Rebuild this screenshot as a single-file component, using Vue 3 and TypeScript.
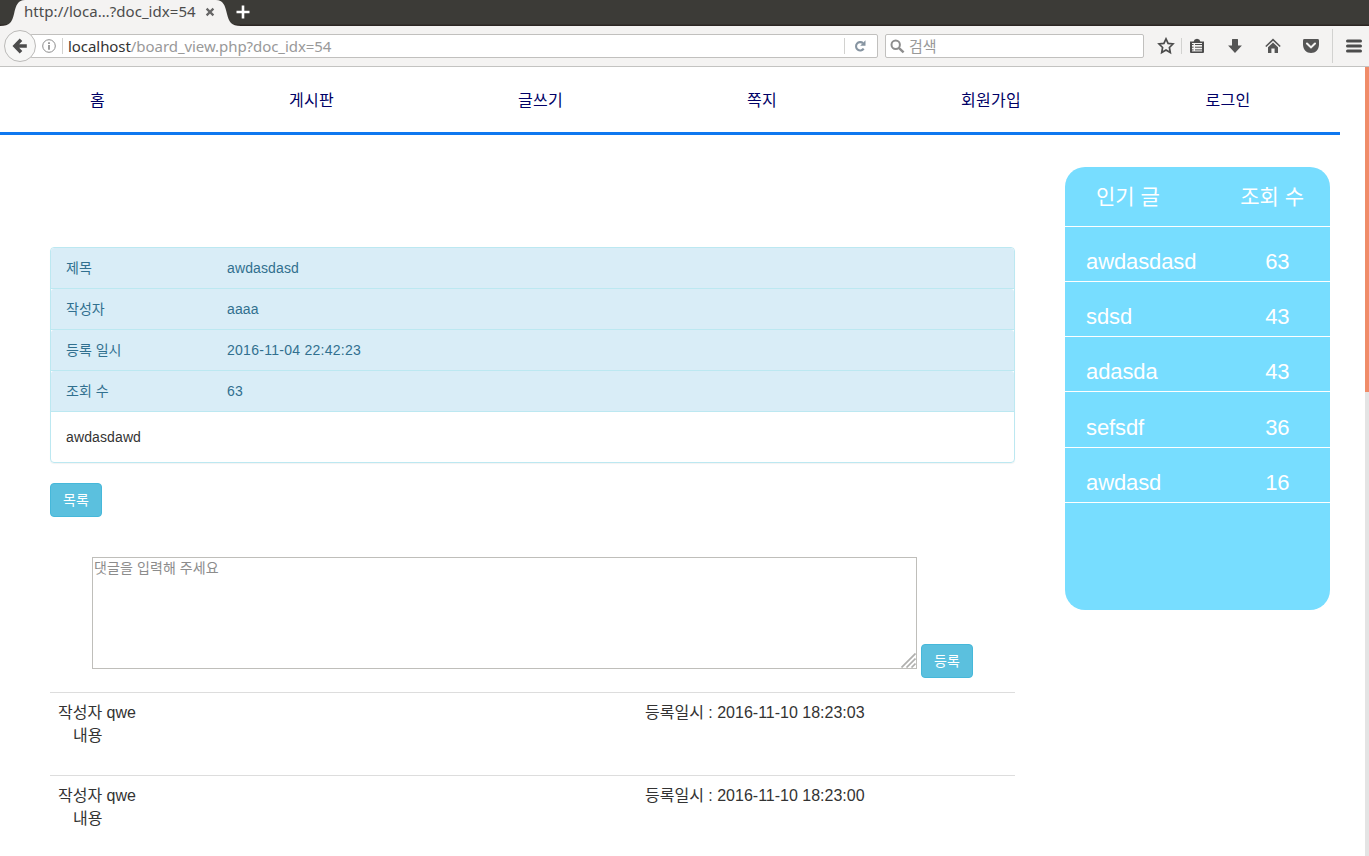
<script setup lang="ts">
interface Row {
  label: string
  value: string
  numeric?: boolean
}

const menu: string[] = ['홈', '게시판', '글쓰기', '쪽지', '회원가입', '로그인']

const info: Row[] = [
  { label: '제목', value: 'awdasdasd' },
  { label: '작성자', value: 'aaaa' },
  { label: '등록 일시', value: '2016-11-04 22:42:23', numeric: true },
  { label: '조회 수', value: '63', numeric: true },
]

const popular: { title: string; hits: number }[] = [
  { title: 'awdasdasd', hits: 63 },
  { title: 'sdsd', hits: 43 },
  { title: 'adasda', hits: 43 },
  { title: 'sefsdf', hits: 36 },
  { title: 'awdasd', hits: 16 },
]

const comments: { author: string; body: string; date: string }[] = [
  { author: 'qwe', body: '내용', date: '2016-11-10 18:23:03' },
  { author: 'qwe', body: '내용', date: '2016-11-10 18:23:00' },
]
</script>

<template>
  <div class="window">
    <header class="tabs">
      <svg class="tab-shape" width="250" height="26" viewBox="0 0 250 26">
        <path d="M0 26C10 26 12 22 14 14C16 5 18 0 25 0H216C223 0 225 5 227 14C229 22 231 26 241 26Z" fill="#f4f3f2" />
      </svg>
      <span class="tab-title">http://loca…?doc_idx=54</span>
      <svg class="tab-close" width="10" height="10" viewBox="0 0 10 10">
        <path d="M1.6 1.6L8.4 8.4M8.4 1.6L1.6 8.4" stroke="#666" stroke-width="2.2" />
      </svg>
      <svg class="tab-new" width="14" height="14" viewBox="0 0 14 14">
        <path d="M7 .5V13.5M.5 7H13.5" stroke="#fff" stroke-width="2.6" />
      </svg>
    </header>

    <div class="toolbar">
      <span class="back">
        <svg width="16" height="16" viewBox="0 0 16 16">
          <path d="M9 1.8L3 8L9 14.2M4 8H14.8" fill="none" stroke="#4c4c4c" stroke-width="3.6" />
        </svg>
      </span>
      <div class="address">
        <svg class="info" width="14" height="14" viewBox="0 0 14 14">
          <circle cx="7" cy="7" r="6.3" fill="none" stroke="#8c8c8c" />
          <path d="M7 3.2V4.9M7 6V10.8" stroke="#8c8c8c" stroke-width="1.7" />
        </svg>
        <i class="split"></i>
        <span class="url"><b>localhost</b>/board_view.php?doc_idx=54</span>
        <i class="split"></i>
        <svg class="reload" width="12" height="12" viewBox="0 0 12 12">
          <path d="M9 3.1A4.2 4.2 0 1 0 9.7 8.7" fill="none" stroke="#8694a1" stroke-width="2.1" />
          <path d="M11.5 .3V5.7H6.2Z" fill="#8694a1" />
        </svg>
      </div>
      <div class="search">
        <svg width="15" height="15" viewBox="0 0 15 15">
          <circle cx="5.7" cy="5.7" r="4.2" fill="none" stroke="#8d8d8d" stroke-width="2" />
          <path d="M8.8 8.8L13.6 13.4" stroke="#8d8d8d" stroke-width="2.4" />
        </svg>
        <span>검색</span>
      </div>
      <div class="icons">
        <svg class="star" width="18" height="18" viewBox="0 0 18 18">
          <path d="M9 1.9L11.1 6.4L16 7L12.4 10.5L13.3 15.6L9 13.1L4.7 15.6L5.6 10.5L2 7L6.9 6.4Z" fill="none" stroke="#4c4c4c" stroke-width="1.7" />
        </svg>
        <i class="split"></i>
        <svg class="clip" width="16" height="16" viewBox="0 0 16 16">
          <path d="M1 3.4H4.6Q5.2 .8 8 .8T11.4 3.4H15V14Q15 15 14 15H2Q1 15 1 14Z" fill="#4c4c4c" />
          <path d="M3 5H13V13.4H3Z" fill="#f4f3f2" />
          <path d="M3 6.5H4.6M6 6.5H13M3 9.2H4.6M6 9.2H13M3 11.9H4.6M6 11.9H13" stroke="#4c4c4c" stroke-width="1" />
        </svg>
        <svg class="down" width="16" height="16" viewBox="0 0 16 16">
          <path d="M5 1.5Q5 1 5.5 1H10.5Q11 1 11 1.5V7.5H14.9L8 15L1.1 7.5H5Z" fill="#555" />
        </svg>
        <svg class="home" width="16" height="16" viewBox="0 0 16 16">
          <path d="M.8 8.5L8 1.7L15.2 8.5" fill="none" stroke="#555" stroke-width="1.6" />
          <path d="M3 9.3L8 4.6L13 9.3V15H9.6V10.5H6.4V15H3Z" fill="#555" />
        </svg>
        <svg class="pocket" width="18" height="16" viewBox="0 0 18 16">
          <path d="M2.4 1H15.6Q17 1 17 2.4V6.5C17 11.5 13.5 15 9 15S1 11.5 1 6.5V2.4Q1 1 2.4 1Z" fill="#555" />
          <path d="M5 5.5L9 9.4L13 5.5" fill="none" stroke="#f4f3f2" stroke-width="2.1" stroke-linecap="round" />
        </svg>
        <i class="split tall"></i>
        <svg class="burger" width="16" height="14" viewBox="0 0 16 14">
          <path d="M1.5 2H14.5M1.5 7H14.5M1.5 12H14.5" stroke="#4c4c4c" stroke-width="3" stroke-linecap="round" />
        </svg>
      </div>
    </div>

    <div class="page">
      <div class="content">
        <nav class="menu">
          <a v-for="item in menu" :key="item">{{ item }}</a>
        </nav>
        <div class="columns">
          <main>
            <section class="panel">
              <div v-for="row in info" :key="row.label" class="panel-row">
                <span>{{ row.label }}</span>
                <span class="value" :class="{ numeric: row.numeric }">{{ row.value }}</span>
              </div>
              <div class="panel-body">awdasdawd</div>
            </section>
            <button class="btn">목록</button>
            <div class="reply">
              <div class="textarea">
                댓글을 입력해 주세요
                <svg class="grip" width="15" height="15" viewBox="0 0 15 15">
                  <path d="M.5 14.5L14.5 .5M5.5 14.5L14.5 5.5M10.5 14.5L14.5 10.5" stroke="#b0b0ae" stroke-width="1.7" />
                </svg>
              </div>
              <button class="btn">등록</button>
            </div>
            <section v-for="c in comments" :key="c.date" class="comment">
              <div class="who">
                <div>작성자 {{ c.author }}</div>
                <div class="text">{{ c.body }}</div>
              </div>
              <div>등록일시 : {{ c.date }}</div>
            </section>
          </main>
          <aside class="popular">
            <div class="pop-head"><span>인기 글</span><span>조회 수</span></div>
            <div v-for="p in popular" :key="p.title" class="pop-row">
              <span>{{ p.title }}</span><span>{{ p.hits }}</span>
            </div>
          </aside>
        </div>
      </div>
      <div class="scrollbar"><div class="thumb"></div></div>
    </div>
  </div>
</template>

<style>
body {
  margin: 0;
  overflow: hidden;
}
</style>

<style scoped>
.window {
  width: 1369px;
  height: 856px;
  overflow: hidden;
  display: flex;
  flex-direction: column;
  background: #fff;
  font-family: "Liberation Sans", "Noto Sans CJK KR", sans-serif;
  color: #333;
}
.window * {
  box-sizing: border-box;
}
svg {
  display: block;
  flex: none;
}
.tabs {
  position: relative;
  flex: none;
  height: 26px;
  background: linear-gradient(#3c3b37 24px, #2c2623 25px);
  display: flex;
  align-items: center;
  padding-left: 24px;
}
.tab-shape {
  position: absolute;
  left: 0;
  top: 0;
}
.tab-title,
.url {
  font-family: "Noto Sans", "Open Sans", sans-serif;
  font-size: 15px;
  white-space: nowrap;
}
.tab-title {
  position: relative;
  width: 181px;
  line-height: 20px;
  margin-top: -4px;
  letter-spacing: 0.06px;
  color: #4c4c4c;
}
.tab-close {
  position: relative;
  margin-top: -2px;
}
.tab-new {
  position: relative;
  margin: -2px 0 0 21px;
}
.toolbar {
  flex: none;
  height: 41px;
  background: #f4f3f2;
  border-bottom: 1px solid #c3c3c1;
  display: flex;
  align-items: center;
  padding-left: 4px;
}
.back {
  position: relative;
  z-index: 1;
  width: 32px;
  height: 32px;
  border: 1px solid #bbbab8;
  border-radius: 50%;
  background: #f7f7f6;
  display: flex;
  align-items: center;
  justify-content: center;
}
.address,
.search {
  height: 24px;
  background: #fff;
  border: 1px solid #c1c0be;
  border-radius: 2px;
  display: flex;
  align-items: center;
}
.address {
  width: 848px;
  margin-left: -6px;
  padding: 0 11px 0 11px;
}
.split {
  width: 1px;
  height: 16px;
  background: #d2d2d0;
  flex: none;
}
.info {
  margin-right: 6px;
}
.url {
  flex: 1;
  margin-left: 5px;
  line-height: 20px;
  letter-spacing: -0.06px;
  color: #999;
}
.url b {
  font-weight: normal;
  color: #333;
}
.reload {
  margin-left: 9px;
}
.search {
  width: 259px;
  margin-left: 7px;
  padding-left: 4px;
  font: 15px/20px "Noto Sans CJK KR", sans-serif;
  color: #999;
}
.search span {
  margin-left: 4px;
}
.icons {
  display: flex;
  align-items: center;
}
.star {
  margin: 0 6px 0 13px;
}
.clip {
  margin-left: 7px;
}
.down,
.home {
  margin-left: 22px;
}
.pocket {
  margin-left: 21px;
}
.tall {
  height: 34px;
  margin: 0 13px 0 12px;
}
.page {
  flex: 1;
  min-height: 0;
  display: flex;
  justify-content: space-between;
}
.content {
  width: 1340px;
}
.menu {
  height: 68px;
  border-bottom: 3px solid #0f78f0;
  display: grid;
  grid-template-columns: 195px 233px 225px 218px 240px 229px;
  text-align: center;
  font-size: 16px;
  line-height: 24px;
  letter-spacing: 0.25px;
  padding-top: 22px;
  color: #000066;
}
.menu a:last-child {
  padding-left: 5px;
}
.columns {
  display: flex;
  align-items: flex-start;
  padding: 32px 10px 0 50px;
  gap: 50px;
}
main {
  width: 965px;
  padding-top: 80px;
}
.panel {
  border: 1px solid #bce8f1;
  border-radius: 4px;
  height: 216px;
  font-size: 14px;
  line-height: 20px;
  box-shadow: 0 1px 1px rgba(0, 0, 0, 0.05);
  overflow: hidden;
}
.panel-row {
  height: 41px;
  padding: 10px 15px;
  display: grid;
  grid-template-columns: 161px 1fr;
  background: #d9edf7;
  border-bottom: 1px solid #bce8f1;
  border-top-left-radius: 3px;
  border-top-right-radius: 3px;
  color: #31708f;
}
.value,
.panel-body {
  letter-spacing: 0.12px;
}
.value.numeric {
  letter-spacing: 0.27px;
}
.panel-body {
  padding: 15px;
}
.btn {
  display: block;
  width: 52px;
  height: 34px;
  padding: 0;
  border: 1px solid #46b8da;
  border-radius: 4px;
  background: #5bc0de;
  color: #fff;
  font: 14px/20px "Liberation Sans", "Noto Sans CJK KR", sans-serif;
}
.panel + .btn {
  margin-top: 20px;
}
.reply {
  display: flex;
  align-items: flex-end;
  gap: 4px;
  margin: 40px 0 14px 42px;
  height: 121px;
}
.textarea {
  position: relative;
  width: 825px;
  height: 112px;
  align-self: flex-start;
  border: 1px solid #bfbeba;
  padding: 0 1px;
  font-size: 14px;
  line-height: 20px;
  letter-spacing: 0.1px;
  color: #8c8c8c;
}
.grip {
  position: absolute;
  right: 0;
  bottom: 0;
}
.comment {
  height: 83px;
  border-top: 1px solid #ddd;
  padding: 8px;
  display: grid;
  grid-template-columns: 587px 1fr;
  font-size: 16px;
  line-height: 23px;
}
.text {
  padding-left: 15px;
}
.popular {
  width: 265px;
  height: 443px;
  border-radius: 20px;
  background: #77ddff;
  color: #fff;
  font-size: 22px;
  line-height: 30px;
}
.pop-head {
  height: 60px;
  border-bottom: 1px solid #fff;
  display: flex;
  justify-content: space-between;
  padding: 15px 26px 0 31px;
  font-size: 21px;
}
.pop-row {
  height: 55.15px;
  border-bottom: 1px solid #fff;
  display: flex;
  justify-content: space-between;
  padding: 20.1px 40.5px 0 21px;
  letter-spacing: -0.1px;
}
.scrollbar {
  width: 4px;
  background: #e4e4e4;
}
.thumb {
  height: 325px;
  background: #f08c69;
}
</style>
